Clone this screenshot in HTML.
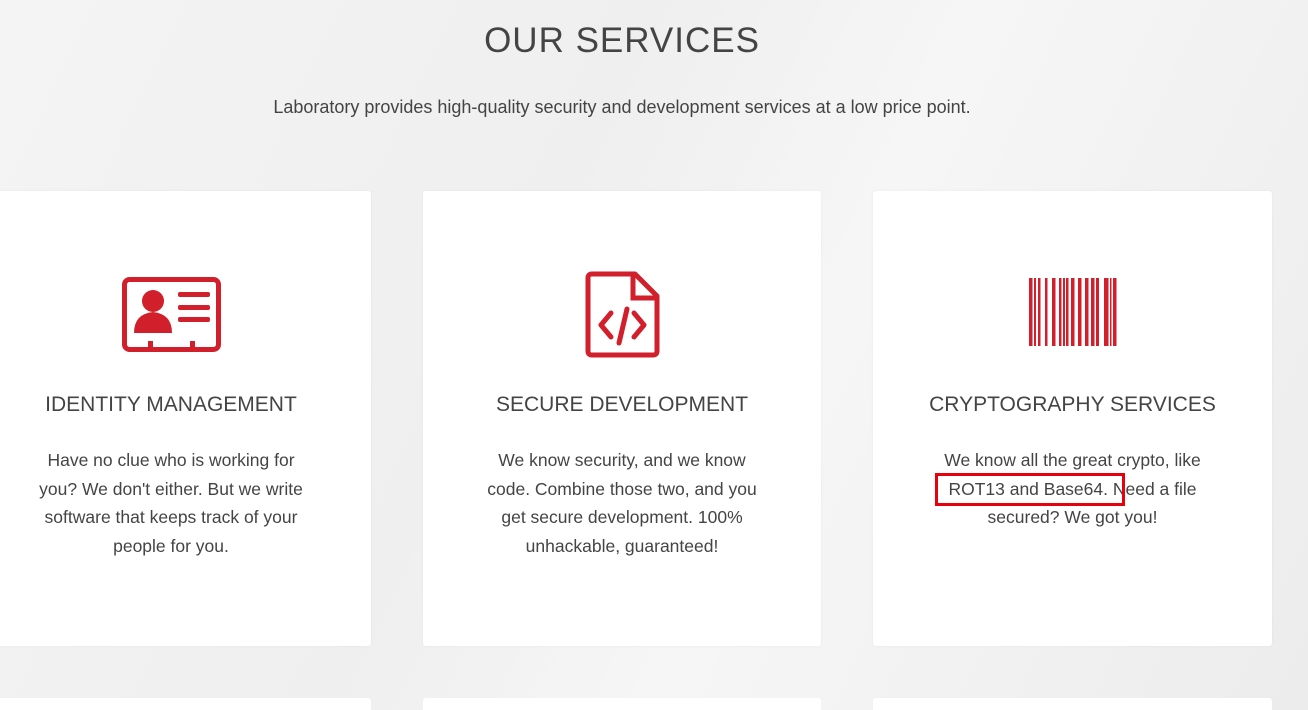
<!DOCTYPE html>
<html><head><style>
html,body{margin:0;width:1308px;height:710px;overflow:hidden}
body{background:#f1f1f1;font-family:"Liberation Sans",sans-serif;color:#444;position:relative}
.bg{position:absolute;inset:0;background:linear-gradient(115deg,#f4f4f4 0%,#efefef 40%,#f6f6f6 60%,#ececec 100%)}
h1{position:absolute;top:21px;left:0;width:1244px;text-align:center;margin:0;font-weight:300;font-size:35px;letter-spacing:1px;color:#444}
.sub{position:absolute;top:97px;left:0;width:1244px;text-align:center;font-size:18px;color:#444}
.card{position:absolute;top:191px;height:455px;background:#fff;border-radius:3px;box-shadow:0 0 3px rgba(0,0,0,.05)}
.card2{position:absolute;top:698px;height:40px;background:#fff;border-radius:3px}
.t{position:absolute;top:202px;left:0;width:100%;text-align:center;font-size:21px;color:#444}
.p{position:absolute;top:255px;left:50%;transform:translateX(-50%);width:272px;text-align:center;font-size:17.5px;line-height:28.5px;color:#444}
svg{position:absolute}
</style></head><body>
<div class="bg"></div>
<h1>OUR SERVICES</h1>
<div class="sub">Laboratory provides high-quality security and development services at a low price point.</div>

<div class="card" style="left:-29px;width:400px">
<svg style="left:151px;top:86px" width="100" height="76" viewBox="0 0 100 76">
<rect x="2.5" y="2.5" width="94" height="70" rx="5" fill="none" stroke="#d11f2b" stroke-width="5"/>
<circle cx="31" cy="24" r="11" fill="#d11f2b"/>
<path d="M12 56 Q12 37 31 35 Q50 37 50 56 Z" fill="#d11f2b"/>
<rect x="56" y="15" width="32" height="5" rx="2" fill="#d11f2b"/>
<rect x="56" y="28" width="32" height="5" rx="2" fill="#d11f2b"/>
<rect x="56" y="40" width="32" height="5" rx="2" fill="#d11f2b"/>
<rect x="26" y="64" width="5" height="8" fill="#d11f2b"/><rect x="68" y="64" width="5" height="8" fill="#d11f2b"/>
</svg>
<div class="t">IDENTITY MANAGEMENT</div>
<div class="p">Have no clue who is working for you? We don't either. But we write software that keeps track of your people for you.</div>
</div>

<div class="card" style="left:423px;width:398px">
<svg style="left:162px;top:80px" width="75" height="87" viewBox="0 0 75 87">
<path d="M7 3 H50 L72 25 V80 Q72 84 68 84 H7 Q3 84 3 80 V7 Q3 3 7 3 Z" fill="none" stroke="#d11f2b" stroke-width="5" stroke-linejoin="round"/>
<path d="M48 4 V27 H71" fill="none" stroke="#d11f2b" stroke-width="5"/>
<path d="M26 42 L16 54 L26 66 M49 42 L59 54 L49 66 M42 38 L34 72" fill="none" stroke="#d11f2b" stroke-width="5" stroke-linecap="round" stroke-linejoin="round"/>
</svg>
<div class="t">SECURE DEVELOPMENT</div>
<div class="p" style="width:285px">We know security, and we know code. Combine those two, and you get secure development. 100% unhackable, guaranteed!</div>
</div>

<div class="card" style="left:873px;width:399px">
<svg style="left:156px;top:87px" width="90" height="68" viewBox="0 0 90 68" fill="#d11f2b">
<rect x="0" width="3.5" height="68"/><rect x="5" width="2" height="68"/><rect x="9" width="2.5" height="68"/><rect x="16" width="2.5" height="68"/><rect x="23" width="3.5" height="68"/><rect x="30" width="2.5" height="68"/><rect x="34" width="2" height="68"/><rect x="37" width="2.5" height="68"/><rect x="42" width="3.5" height="68"/><rect x="49" width="3.5" height="68"/><rect x="56" width="3.5" height="68"/><rect x="62" width="3.5" height="68"/><rect x="67" width="3" height="68"/><rect x="75" width="4.5" height="68"/><rect x="81" width="1.5" height="68"/><rect x="84" width="3.5" height="68"/>
</svg>
<div class="t">CRYPTOGRAPHY SERVICES</div>
<div class="p" style="width:285px">We know all the great crypto, like ROT13 and Base64. Need a file secured? We got you!</div>
</div>
<div style="position:absolute;left:935px;top:473px;width:184px;height:27px;border:3px solid #e8000b"></div>

<div class="card2" style="left:-29px;width:400px"></div>
<div class="card2" style="left:423px;width:398px"></div>
<div class="card2" style="left:873px;width:399px"></div>
</body></html>
